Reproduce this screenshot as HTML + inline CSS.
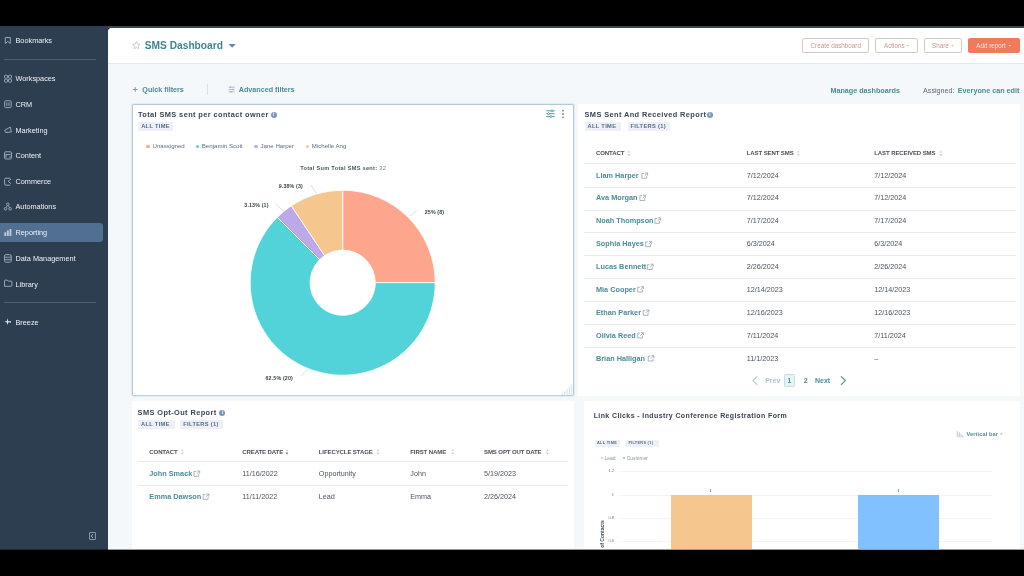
<!DOCTYPE html><html><head><meta charset="utf-8"><style>
*{box-sizing:border-box;margin:0;padding:0}
html,body{width:1024px;height:576px;overflow:hidden;background:#000}
body{position:relative;font-family:"Liberation Sans",sans-serif;color:#33475b}
.a{position:absolute;white-space:nowrap}
.nav{position:absolute;left:15.5px;font-size:7.3px;color:#eef2f6;line-height:10px;white-space:nowrap}
.lnk{color:#488d95;font-weight:700}
.tag{position:absolute;height:9px;background:#edf1f7;color:#566a86;font-weight:700;font-size:5.7px;line-height:9.2px;padding:0 3px;border-radius:1px;white-space:nowrap;letter-spacing:0.33px}
.th{position:absolute;font-weight:700;font-size:6.05px;line-height:8px;color:#4a5059;letter-spacing:-0.12px;white-space:nowrap}
.td{position:absolute;font-size:7.2px;line-height:10px;color:#4a5561;white-space:nowrap}
.tl{position:absolute;font-size:7.3px;line-height:10.5px;color:#4b8c95;font-weight:700;white-space:nowrap}
.hr{position:absolute;height:1px;background:#e8ecf0}
.ttl{position:absolute;font-size:7.4px;line-height:10px;font-weight:700;color:#3a4552;white-space:nowrap;letter-spacing:0.4px}
svg{position:absolute;overflow:visible}
</style></head><body><div id="root" style="position:absolute;left:0;top:0;width:1024px;height:576px;will-change:transform">
<div class="a" style="left:0;top:25.5px;width:1024px;height:2.5px;background:#3e4651"></div>
<div class="a" style="left:0;top:26px;width:108px;height:524px;background:#2d3e50"></div>
<div class="a" style="left:108px;top:27.5px;width:916px;height:522.5px;background:#f5f8fa;border-top-left-radius:4px;overflow:hidden"><div class="a" style="left:0;top:0;width:916px;height:36px;background:#fff;border-bottom:1px solid #e3e8ee"></div></div>
<div class="nav" style="top:36.1px">Bookmarks</div>
<svg style="left:0;top:0" width="1" height="1"><path d="M5.3 37.5h5v6l-2.5-2-2.5 2z" fill="none" stroke="#95a7ba" stroke-width="1" stroke-linejoin="round"/></svg>
<div class="a" style="left:4px;top:59px;width:92px;height:1px;background:#4b6078"></div>
<div class="nav" style="top:74.1px">Workspaces</div>
<svg style="left:0;top:0" width="1" height="1"><rect x="4.5" y="75.2" width="3" height="3" rx="0.8" fill="none" stroke="#95a7ba" stroke-width="1"/><rect x="8.5" y="75.2" width="3" height="3" rx="0.8" fill="none" stroke="#95a7ba" stroke-width="1"/><rect x="4.5" y="79.2" width="3" height="3" rx="0.8" fill="none" stroke="#95a7ba" stroke-width="1"/><rect x="8.5" y="79.2" width="3" height="3" rx="0.8" fill="none" stroke="#95a7ba" stroke-width="1"/></svg>
<div class="nav" style="top:99.6px">CRM</div>
<svg style="left:0;top:0" width="1" height="1"><rect x="4.6" y="100.8" width="6.6" height="6.8" rx="1" fill="none" stroke="#95a7ba" stroke-width="1"/><path d="M6.8 102.4v3.6M9 102.4v3.6" fill="none" stroke="#95a7ba" stroke-width="1" stroke-width="0.8"/></svg>
<div class="nav" style="top:125.6px">Marketing</div>
<svg style="left:0;top:0" width="1" height="1"><path d="M4.6 130.3l5.8-3.2 0.9 4.9-5.6 0.4z M6.5 131.9l0.6 1.2" fill="none" stroke="#95a7ba" stroke-width="1" stroke-linejoin="round"/></svg>
<div class="nav" style="top:151.35px">Content</div>
<svg style="left:0;top:0" width="1" height="1"><rect x="4.5" y="151.8" width="7" height="7.2" rx="1.2" fill="none" stroke="#95a7ba" stroke-width="1"/><path d="M5.5 154.5h5M6 154.5v3.5M10 156v2" fill="none" stroke="#95a7ba" stroke-width="1" stroke-width="0.8"/></svg>
<div class="nav" style="top:176.85px">Commerce</div>
<svg style="left:0;top:0" width="1" height="1"><path d="M10.3 178.2h-4.5a1.2 1.2 0 0 0-1.2 1.2v4.6a1.2 1.2 0 0 0 1.2 1.2h4.5" fill="none" stroke="#95a7ba" stroke-width="1"/><path d="M11 179l-2.8 2.3 2.8 2.5" fill="none" stroke="#95a7ba" stroke-width="1"/></svg>
<div class="nav" style="top:202.35px">Automations</div>
<svg style="left:0;top:0" width="1" height="1"><circle cx="7.8" cy="204.3" r="1.3" fill="none" stroke="#95a7ba" stroke-width="1"/><circle cx="5.5" cy="208.8" r="1.3" fill="none" stroke="#95a7ba" stroke-width="1"/><circle cx="10.1" cy="208.8" r="1.3" fill="none" stroke="#95a7ba" stroke-width="1"/><path d="M7.2 205.5l-0.9 2M8.4 205.5l0.9 2" fill="none" stroke="#95a7ba" stroke-width="1" stroke-width="0.8"/></svg>
<div class="a" style="left:0;top:222.5px;width:102.5px;height:19.5px;background:#516f90;border-radius:0 3px 3px 0"></div>
<div class="nav" style="top:228.35px">Reporting</div>
<svg style="left:0;top:0" width="1" height="1"><path d="M4.3 232.2h1.9v3.8h-1.9zM6.9 230.5h1.9v5.5h-1.9zM9.5 229h1.9v7h-1.9z" fill="#b9cadb"/></svg>
<div class="nav" style="top:254.1px">Data Management</div>
<svg style="left:0;top:0" width="1" height="1"><rect x="4.5" y="254.6" width="6.8" height="7.6" rx="1.5" fill="none" stroke="#95a7ba" stroke-width="1"/><path d="M4.8 257.2h6.2M4.8 259.7h6.2" fill="none" stroke="#95a7ba" stroke-width="1" stroke-width="0.8"/></svg>
<div class="nav" style="top:279.6px">Library</div>
<svg style="left:0;top:0" width="1" height="1"><path d="M4.5 286.3v-5.4a0.8 0.8 0 0 1 0.8-0.8h1.8l1 1h3a0.8 0.8 0 0 1 0.8 0.8v3.6a0.8 0.8 0 0 1-0.8 0.8z" fill="none" stroke="#95a7ba" stroke-width="1" stroke-linejoin="round"/></svg>
<div class="a" style="left:4px;top:302px;width:92px;height:1px;background:#4b6078"></div>
<div class="nav" style="top:317.6px">Breeze</div>
<svg style="left:0;top:0" width="1" height="1"><path d="M7.5 318.3l0.7 2.8 2.6 0.7-2.6 0.7-0.7 2.8-0.7-2.8-2.6-0.7 2.6-0.7z" fill="#cfdcea"/><circle cx="10.2" cy="321.8" r="0.9" fill="#cfdcea"/></svg>
<div class="a" style="left:88.5px;top:532px;width:7.5px;height:8px;border:0.8px solid #8796a8;border-radius:1px"></div>
<svg style="left:0;top:0" width="1" height="1"><path d="M93 534.3l-1.8 1.8 1.8 1.8" fill="none" stroke="#c8d0da" stroke-width="0.9"/></svg>
<svg style="left:0;top:0" width="1" height="1"><path d="M136.3 41.6l1.1 2.4 2.6.3-1.9 1.8.5 2.6-2.3-1.3-2.3 1.3.5-2.6-1.9-1.8 2.6-.3z" fill="none" stroke="#b9c3cf" stroke-width="0.8"/></svg>
<div class="a" style="left:144.8px;top:40.8px;font-size:10.2px;line-height:10px;font-weight:700;color:#3f8590">SMS Dashboard</div>
<svg style="left:0;top:0" width="1" height="1"><path d="M228.5 44h7.3l-3.65 3.8z" fill="#6d87a0"/></svg>
<div class="a" style="left:802.2px;top:38px;width:67.29999999999995px;height:15.3px;background:#fff;border:0.9px solid #d6c8c4;border-radius:2px"></div>
<div class="a" style="left:810.5px;top:40.6px;font-size:6.3px;line-height:10px;color:#c39b8d">Create dashboard</div>
<div class="a" style="left:875px;top:38px;width:42.60000000000002px;height:15.3px;background:#fff;border:0.9px solid #d6c8c4;border-radius:2px"></div>
<div class="a" style="left:884px;top:40.6px;font-size:6.3px;line-height:10px;color:#c39b8d">Actions</div>
<svg style="left:0;top:0" width="1" height="1"><path d="M906.5 45.3h2.6l-1.3 1.3z" fill="#c9a699"/></svg>
<div class="a" style="left:923.6px;top:38px;width:38.39999999999998px;height:15.3px;background:#fff;border:0.9px solid #d6c8c4;border-radius:2px"></div>
<div class="a" style="left:932px;top:40.6px;font-size:6.3px;line-height:10px;color:#c39b8d">Share</div>
<svg style="left:0;top:0" width="1" height="1"><path d="M951.2 45.3h2.6l-1.3 1.3z" fill="#c9a699"/></svg>
<div class="a" style="left:968px;top:38px;width:52px;height:15.3px;background:#f07b5a;border-radius:2px"></div>
<div class="a" style="left:976.2px;top:40.6px;font-size:6.3px;line-height:10px;color:#fde6de">Add report</div>
<svg style="left:0;top:0" width="1" height="1"><path d="M1008.6 45.3h2.6l-1.3 1.3z" fill="#fde6de"/></svg>
<svg style="left:0;top:0" width="1" height="1"><path d="M132.8 89.5h4.8M135.2 87.1v4.8" stroke="#7c8fa3" stroke-width="0.9"/></svg>
<div class="a lnk" style="left:142.3px;top:84.5px;font-size:7.2px;line-height:10px">Quick filters</div>
<div class="a" style="left:207.3px;top:84.3px;width:0.8px;height:11px;background:#dbe2e9"></div>
<svg style="left:0;top:0" width="1" height="1"><path d="M228.6 87.2h6M228.6 89.5h6M228.6 91.8h6" stroke="#9aa9b8" stroke-width="0.8"/><path d="M230.5 86.4v1.6M233 88.7v1.6M231 91v1.6" stroke="#9aa9b8" stroke-width="0.8"/></svg>
<div class="a lnk" style="left:238.7px;top:84.5px;font-size:7.2px;line-height:10px">Advanced filters</div>
<div class="a lnk" style="left:830.4px;top:85.8px;font-size:7.2px;line-height:10px">Manage dashboards</div>
<div class="a" style="left:923px;top:85.8px;font-size:7.2px;line-height:10px;color:#5c6b7a">Assigned:</div>
<div class="a lnk" style="left:957.8px;top:85.8px;font-size:7.2px;line-height:10px">Everyone can edit</div>
<div class="a" style="left:132.4px;top:103.5px;width:441.4px;height:292.7px;background:#fff;border:1px solid #b5cad1;border-bottom:1.3px solid #bcd0d7;border-radius:2px;box-shadow:0 0 1.5px 1px #dcedf2"></div>
<div class="a" style="left:578.4px;top:103.8px;width:441.6px;height:292.4px;background:#fff;border-radius:2px"></div>
<div class="a" style="left:132px;top:401.3px;width:441.6px;height:160px;background:#fff;border-radius:2px"></div>
<div class="a" style="left:584px;top:401.3px;width:436px;height:160px;background:#fff;border-radius:2px"></div>
<div class="ttl" style="left:137.9px;top:109.5px">Total SMS sent per contact owner</div>
<div class="a" style="left:270.5px;top:111.6px;width:6px;height:6px;border-radius:50%;background:#7c98b6;color:#fff;font-size:4.5px;line-height:6px;text-align:center;font-weight:700">i</div>
<div class="tag" style="left:138.2px;top:122.3px;width:35px">ALL TIME</div>
<svg style="left:0;top:0" width="1" height="1"><path d="M546.3 110.8h8.4M546.3 113.7h8.4M546.3 116.6h8.4" stroke="#488d95" stroke-width="0.9"/><circle cx="552" cy="110.8" r="1" fill="#fff" stroke="#488d95" stroke-width="0.7"/><circle cx="548.5" cy="113.7" r="1" fill="#fff" stroke="#488d95" stroke-width="0.7"/><circle cx="551" cy="116.6" r="1" fill="#fff" stroke="#488d95" stroke-width="0.7"/><circle cx="563" cy="110.7" r="0.9" fill="#488d95"/><circle cx="563" cy="114" r="0.9" fill="#488d95"/><circle cx="563" cy="117.3" r="0.9" fill="#488d95"/></svg>
<div class="a" style="left:146.4px;top:144.6px;width:3.2px;height:3.2px;border-radius:50%;background:#fea58e"></div>
<div class="a" style="left:152.5px;top:141px;font-size:6.1px;line-height:9.5px;color:#5c6d80">Unassigned</div>
<div class="a" style="left:195.9px;top:144.6px;width:3.2px;height:3.2px;border-radius:50%;background:#51d3d9"></div>
<div class="a" style="left:201.8px;top:141px;font-size:6.1px;line-height:9.5px;color:#5c6d80">Benjamin Scott</div>
<div class="a" style="left:254.4px;top:144.6px;width:3.2px;height:3.2px;border-radius:50%;background:#bda9ea"></div>
<div class="a" style="left:260.5px;top:141px;font-size:6.1px;line-height:9.5px;color:#5c6d80">Jane Harper</div>
<div class="a" style="left:305.7px;top:144.6px;width:3.2px;height:3.2px;border-radius:50%;background:#f5c78e"></div>
<div class="a" style="left:311.8px;top:141px;font-size:6.1px;line-height:9.5px;color:#5c6d80">Michelle Ang</div>
<div class="a" style="left:300.2px;top:164px;font-size:5.6px;line-height:8.5px;color:#4a5560;letter-spacing:0.3px"><b>Total Sum Total SMS sent:</b> <span style="color:#7a8591">32</span></div>
<svg style="left:0;top:0" width="1" height="1"><path d="M342.70 190.20A92.5 92.5 0 0 1 435.20 282.70L375.30 282.70A32.6 32.6 0 0 0 342.70 250.10Z" fill="#fea58e" stroke="#fff" stroke-width="0.8"/><path d="M435.20 282.70A92.5 92.5 0 1 1 277.29 217.29L319.65 259.65A32.6 32.6 0 1 0 375.30 282.70Z" fill="#51d3d9" stroke="#fff" stroke-width="0.8"/><path d="M277.29 217.29A92.5 92.5 0 0 1 291.31 205.79L324.59 255.59A32.6 32.6 0 0 0 319.65 259.65Z" fill="#bda9ea" stroke="#fff" stroke-width="0.8"/><path d="M291.31 205.79A92.5 92.5 0 0 1 342.70 190.20L342.70 250.10A32.6 32.6 0 0 0 324.59 255.59Z" fill="#f5c78e" stroke="#fff" stroke-width="0.8"/><path d="M311 185L316.3 193.7M275.4 204L284 211.3M409.7 216.2L417.2 210.4M301.2 376.2L308 368.7" stroke="#c5ccd3" stroke-width="0.6" fill="none"/></svg>
<div class="a" style="left:278.7px;top:182.1px;font-size:5.3px;line-height:8px;font-weight:700;color:#3a4550;letter-spacing:0.15px">9.38% (3)</div>
<div class="a" style="left:244.3px;top:201px;font-size:5.3px;line-height:8px;font-weight:700;color:#3a4550;letter-spacing:0.15px">3.13% (1)</div>
<div class="a" style="left:424.7px;top:208px;font-size:5.3px;line-height:8px;font-weight:700;color:#3a4550;letter-spacing:0.15px">25% (8)</div>
<div class="a" style="left:265.5px;top:374.2px;font-size:5.3px;line-height:8px;font-weight:700;color:#3a4550;letter-spacing:0.15px">62.5% (20)</div>
<svg style="left:0;top:0" width="1" height="1"><path d="M562.5 395v-1.5M564.8 395v-3.8M567.1 395v-6M569.4 395v-8.3M571.7 395v-10.6" stroke="#b9d6dc" stroke-width="0.7"/></svg>
<div class="ttl" style="left:584.5px;top:109.6px">SMS Sent And Received Report</div>
<div class="a" style="left:707px;top:111.6px;width:6px;height:6px;border-radius:50%;background:#7c98b6;color:#fff;font-size:4.5px;line-height:6px;text-align:center;font-weight:700">i</div>
<div class="tag" style="left:584.5px;top:122.3px;width:36.7px">ALL TIME</div>
<div class="tag" style="left:627.5px;top:122.3px;width:42.5px">FILTERS (1)</div>
<div class="th" style="left:596px;top:149.3px">CONTACT</div>
<svg style="left:0;top:0" width="1" height="1"><path d="M627.5 152.60000000000002l1.4-2.2 1.4 2.2z" fill="#cfd5dc"/><path d="M627.5 154.0l1.4 2.2 1.4-2.2z" fill="#c3ccd6"/></svg>
<div class="th" style="left:746.8px;top:149.3px">LAST SENT SMS</div>
<svg style="left:0;top:0" width="1" height="1"><path d="M797 152.60000000000002l1.4-2.2 1.4 2.2z" fill="#cfd5dc"/><path d="M797 154.0l1.4 2.2 1.4-2.2z" fill="#c3ccd6"/></svg>
<div class="th" style="left:874.3px;top:149.3px">LAST RECEIVED SMS</div>
<svg style="left:0;top:0" width="1" height="1"><path d="M939.5 152.60000000000002l1.4-2.2 1.4 2.2z" fill="#cfd5dc"/><path d="M939.5 154.0l1.4 2.2 1.4-2.2z" fill="#c3ccd6"/></svg>
<div class="hr" style="left:584px;top:163px;width:431.5px"></div>
<div class="tl" style="left:596px;top:170.8px" id="r0">Liam Harper</div>
<svg style="left:0;top:0" width="1" height="1"><path d="M646.7 176.10000000000002v2.2h-4.8v-4.8h2.2M645.0 173.0h2.6v2.6M647.5 173.10000000000002l-2.8 2.8" fill="none" stroke="#8d9ca6" stroke-width="0.75"/></svg>
<div class="td" style="left:746.8px;top:170.8px">7/12/2024</div>
<div class="td" style="left:874.3px;top:170.8px">7/12/2024</div>
<div class="hr" style="left:584px;top:186.5px;width:431.5px"></div>
<div class="tl" style="left:596px;top:193px" id="r1">Ava Morgan</div>
<svg style="left:0;top:0" width="1" height="1"><path d="M644.7 198.3v2.2h-4.8v-4.8h2.2M643.0 195.2h2.6v2.6M645.5 195.3l-2.8 2.8" fill="none" stroke="#8d9ca6" stroke-width="0.75"/></svg>
<div class="td" style="left:746.8px;top:193px">7/12/2024</div>
<div class="td" style="left:874.3px;top:193px">7/12/2024</div>
<div class="hr" style="left:584px;top:209.5px;width:431.5px"></div>
<div class="tl" style="left:596px;top:215.8px" id="r2">Noah Thompson</div>
<svg style="left:0;top:0" width="1" height="1"><path d="M659.7 221.10000000000002v2.2h-4.8v-4.8h2.2M658.0 218.0h2.6v2.6M660.5 218.10000000000002l-2.8 2.8" fill="none" stroke="#8d9ca6" stroke-width="0.75"/></svg>
<div class="td" style="left:746.8px;top:215.8px">7/17/2024</div>
<div class="td" style="left:874.3px;top:215.8px">7/17/2024</div>
<div class="hr" style="left:584px;top:232px;width:431.5px"></div>
<div class="tl" style="left:596px;top:239.2px" id="r3">Sophia Hayes</div>
<svg style="left:0;top:0" width="1" height="1"><path d="M650.5 244.5v2.2h-4.8v-4.8h2.2M648.8 241.39999999999998h2.6v2.6M651.3 241.5l-2.8 2.8" fill="none" stroke="#8d9ca6" stroke-width="0.75"/></svg>
<div class="td" style="left:746.8px;top:239.2px">6/3/2024</div>
<div class="td" style="left:874.3px;top:239.2px">6/3/2024</div>
<div class="hr" style="left:584px;top:255px;width:431.5px"></div>
<div class="tl" style="left:596px;top:262px" id="r4">Lucas Bennett</div>
<svg style="left:0;top:0" width="1" height="1"><path d="M652.2 267.3v2.2h-4.8v-4.8h2.2M650.5 264.2h2.6v2.6M653.0 264.3l-2.8 2.8" fill="none" stroke="#8d9ca6" stroke-width="0.75"/></svg>
<div class="td" style="left:746.8px;top:262px">2/26/2024</div>
<div class="td" style="left:874.3px;top:262px">2/26/2024</div>
<div class="hr" style="left:584px;top:278px;width:431.5px"></div>
<div class="tl" style="left:596px;top:284.5px" id="r5">Mia Cooper</div>
<svg style="left:0;top:0" width="1" height="1"><path d="M642.5 289.8v2.2h-4.8v-4.8h2.2M640.8 286.7h2.6v2.6M643.3 286.8l-2.8 2.8" fill="none" stroke="#8d9ca6" stroke-width="0.75"/></svg>
<div class="td" style="left:746.8px;top:284.5px">12/14/2023</div>
<div class="td" style="left:874.3px;top:284.5px">12/14/2023</div>
<div class="hr" style="left:584px;top:300.8px;width:431.5px"></div>
<div class="tl" style="left:596px;top:307.8px" id="r6">Ethan Parker</div>
<svg style="left:0;top:0" width="1" height="1"><path d="M648.0 313.1v2.2h-4.8v-4.8h2.2M646.3 310.0h2.6v2.6M648.8 310.1l-2.8 2.8" fill="none" stroke="#8d9ca6" stroke-width="0.75"/></svg>
<div class="td" style="left:746.8px;top:307.8px">12/16/2023</div>
<div class="td" style="left:874.3px;top:307.8px">12/16/2023</div>
<div class="hr" style="left:584px;top:323.5px;width:431.5px"></div>
<div class="tl" style="left:596px;top:330.5px" id="r7">Olivia Reed</div>
<svg style="left:0;top:0" width="1" height="1"><path d="M642.5 335.8v2.2h-4.8v-4.8h2.2M640.8 332.7h2.6v2.6M643.3 332.8l-2.8 2.8" fill="none" stroke="#8d9ca6" stroke-width="0.75"/></svg>
<div class="td" style="left:746.8px;top:330.5px">7/11/2024</div>
<div class="td" style="left:874.3px;top:330.5px">7/11/2024</div>
<div class="hr" style="left:584px;top:346.5px;width:431.5px"></div>
<div class="tl" style="left:596px;top:353.5px" id="r8">Brian Halligan</div>
<svg style="left:0;top:0" width="1" height="1"><path d="M653.0 358.8v2.2h-4.8v-4.8h2.2M651.3 355.7h2.6v2.6M653.8 355.8l-2.8 2.8" fill="none" stroke="#8d9ca6" stroke-width="0.75"/></svg>
<div class="td" style="left:746.8px;top:353.5px">11/1/2023</div>
<div class="td" style="left:874.3px;top:353.5px">&ndash;</div>
<svg style="left:0;top:0" width="1" height="1"><path d="M757.2 376.3L752.9 380.6L757.2 384.9" fill="none" stroke="#b9c3cc" stroke-width="1.1"/><path d="M841 376.3L845.4 380.6L841 384.9" fill="none" stroke="#4d8a95" stroke-width="1.15"/></svg>
<div class="a" style="left:765.2px;top:376px;font-size:7px;line-height:10px;color:#b3bfcc;font-weight:700">Prev</div>
<div class="a" style="left:784px;top:374px;width:10.8px;height:13px;border:0.8px solid #bfe0e6;background:#e6f4f7;border-radius:1.5px;color:#488d95;font-size:6.8px;line-height:11.5px;text-align:center;font-weight:700">1</div>
<div class="a lnk" style="left:803.8px;top:376px;font-size:7px;line-height:10px">2</div>
<div class="a lnk" style="left:815px;top:376px;font-size:7px;line-height:10px">Next</div>
<div class="ttl" style="left:137.6px;top:407.8px">SMS Opt-Out Report</div>
<div class="a" style="left:219.3px;top:409.6px;width:6px;height:6px;border-radius:50%;background:#7c98b6;color:#fff;font-size:4.5px;line-height:6px;text-align:center;font-weight:700">i</div>
<div class="tag" style="left:138px;top:420.1px;width:36.6px">ALL TIME</div>
<div class="tag" style="left:180.3px;top:420.1px;width:42.5px">FILTERS (1)</div>
<div class="th" style="left:149.3px;top:447.8px">CONTACT</div>
<svg style="left:0;top:0" width="1" height="1"><path d="M181 451.1l1.4-2.2 1.4 2.2z" fill="#cfd5dc"/><path d="M181 452.5l1.4 2.2 1.4-2.2z" fill="#c3ccd6"/></svg>
<div class="th" style="left:242.3px;top:447.8px">CREATE DATE</div>
<svg style="left:0;top:0" width="1" height="1"><path d="M285.5 451.1l1.4-2.2 1.4 2.2z" fill="#cfd5dc"/><path d="M285.5 452.5l1.4 2.2 1.4-2.2z" fill="#488d95"/></svg>
<div class="th" style="left:318.8px;top:447.8px">LIFECYCLE STAGE</div>
<svg style="left:0;top:0" width="1" height="1"><path d="M376.5 451.1l1.4-2.2 1.4 2.2z" fill="#cfd5dc"/><path d="M376.5 452.5l1.4 2.2 1.4-2.2z" fill="#c3ccd6"/></svg>
<div class="th" style="left:410.3px;top:447.8px">FIRST NAME</div>
<svg style="left:0;top:0" width="1" height="1"><path d="M451.5 451.1l1.4-2.2 1.4 2.2z" fill="#cfd5dc"/><path d="M451.5 452.5l1.4 2.2 1.4-2.2z" fill="#c3ccd6"/></svg>
<div class="th" style="left:484px;top:447.8px">SMS OPT OUT DATE</div>
<svg style="left:0;top:0" width="1" height="1"><path d="M546 451.1l1.4-2.2 1.4 2.2z" fill="#cfd5dc"/><path d="M546 452.5l1.4 2.2 1.4-2.2z" fill="#c3ccd6"/></svg>
<div class="hr" style="left:138px;top:461px;width:430px"></div>
<div class="hr" style="left:138px;top:484.5px;width:430px"></div>
<div class="tl" style="left:149.3px;top:468.90000000000003px">John Smack</div>
<svg style="left:0;top:0" width="1" height="1"><path d="M198.8 474.1v2.2h-4.8v-4.8h2.2M197.10000000000002 471.0h2.6v2.6M199.60000000000002 471.1l-2.8 2.8" fill="none" stroke="#8d9ca6" stroke-width="0.75"/></svg>
<div class="td" style="left:242.3px;top:468.8px">11/16/2022</div>
<div class="td" style="left:318.8px;top:468.8px">Opportunity</div>
<div class="td" style="left:410.3px;top:468.8px">John</div>
<div class="td" style="left:484px;top:468.8px">5/19/2023</div>
<div class="tl" style="left:149.3px;top:491.90000000000003px">Emma Dawson</div>
<svg style="left:0;top:0" width="1" height="1"><path d="M208.0 497.1v2.2h-4.8v-4.8h2.2M206.3 494.0h2.6v2.6M208.8 494.1l-2.8 2.8" fill="none" stroke="#8d9ca6" stroke-width="0.75"/></svg>
<div class="td" style="left:242.3px;top:491.8px">11/11/2022</div>
<div class="td" style="left:318.8px;top:491.8px">Lead</div>
<div class="td" style="left:410.3px;top:491.8px">Emma</div>
<div class="td" style="left:484px;top:491.8px">2/26/2024</div>
<div class="ttl" style="left:593.7px;top:410.6px;font-size:7.0px;letter-spacing:0.39px">Link Clicks - Industry Conference Registration Form</div>
<div class="tag" style="left:595px;top:439.5px;width:25.3px;height:7px;font-size:3.8px;line-height:7px;padding:0 2px">ALL TIME</div>
<div class="tag" style="left:626.4px;top:439.5px;width:32.6px;height:7px;font-size:3.8px;line-height:7px;padding:0 2px">FILTERS (1)</div>
<div class="a" style="left:601px;top:456.8px;width:2px;height:2px;border-radius:50%;background:#f5c78e"></div>
<div class="a" style="left:604.5px;top:455.8px;font-size:4.9px;line-height:6px;color:#8a96a3">Lead</div>
<div class="a" style="left:623.3px;top:456.8px;width:2px;height:2px;border-radius:50%;background:#81c1fd"></div>
<div class="a" style="left:626.8px;top:455.8px;font-size:4.9px;line-height:6px;color:#8a96a3">Customer</div>
<div class="a" style="left:966.6px;top:431.1px;font-size:5.6px;line-height:7.5px;color:#4d8e98;font-weight:700;letter-spacing:0.1px">Vertical bar</div>
<svg style="left:0;top:0" width="1" height="1"><path d="M1000 433.5h2.4l-1.2 1.3z" fill="#8a9aa8"/></svg>
<svg style="left:0;top:0" width="1" height="1"><path d="M957.3 431v6.3" stroke="#d9a0b0" stroke-width="0.7" fill="none"/><path d="M959.2 437.3v-5M961 437.3v-3M962.7 437.3v-1.8" stroke="#9fb0c6" stroke-width="0.8" fill="none"/></svg>
<div class="hr" style="left:619px;top:471.2px;width:373px;background:#f2f4f6"></div>
<div class="a" style="left:604px;top:468.2px;width:10px;text-align:right;font-size:4px;line-height:6px;color:#6b7a89">1.2</div>
<div class="hr" style="left:619px;top:494.7px;width:373px;background:#f2f4f6"></div>
<div class="a" style="left:604px;top:491.7px;width:10px;text-align:right;font-size:4px;line-height:6px;color:#6b7a89">1</div>
<div class="hr" style="left:619px;top:517.6px;width:373px;background:#f2f4f6"></div>
<div class="a" style="left:604px;top:514.6px;width:10px;text-align:right;font-size:4px;line-height:6px;color:#6b7a89">0.8</div>
<div class="hr" style="left:619px;top:541.2px;width:373px;background:#f2f4f6"></div>
<div class="a" style="left:604px;top:538.2px;width:10px;text-align:right;font-size:4px;line-height:6px;color:#6b7a89">0.6</div>
<div class="a" style="left:671.3px;top:494.7px;width:81px;height:60px;background:#f5c78e"></div>
<div class="a" style="left:858px;top:494.7px;width:81px;height:60px;background:#81c1fd"></div>
<div class="a" style="left:709.5px;top:487.5px;font-size:4px;line-height:6px;color:#33475b">1</div>
<div class="a" style="left:897.5px;top:487.5px;font-size:4px;line-height:6px;color:#33475b">1</div>
<div class="a" style="left:598.6px;top:552px;font-size:5px;line-height:6px;font-weight:700;color:#3b4650;transform:rotate(-90deg);transform-origin:0 0"># of Contacts</div>
<div class="a" style="left:108px;top:549px;width:916px;height:1px;background:#9a9a9a"></div>
<div class="a" style="left:0;top:549px;width:108px;height:1px;background:#1c2630"></div>
<div class="a" style="left:0;top:550px;width:1024px;height:26px;background:#000"></div>
</div></body></html>
